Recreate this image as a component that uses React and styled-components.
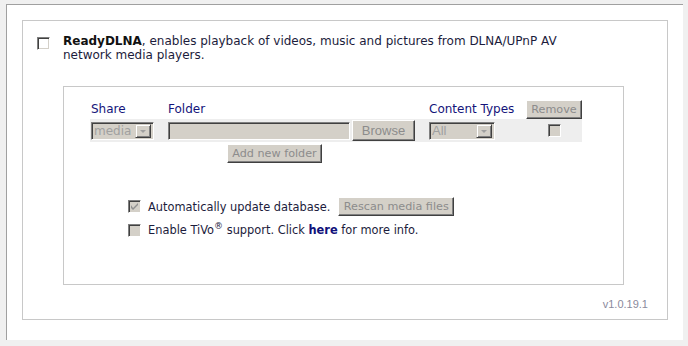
import React from "react";
import styled, { createGlobalStyle } from "styled-components";

const GlobalStyle = createGlobalStyle`
  body {
    margin: 0;
    background: #f0f0f0;
    font-family: "DejaVu Sans", Verdana, sans-serif;
    font-size: 12px;
  }
`;

const Page = styled.div`
  width: 677px;
  height: 336px;
  margin: 4px 0 0 6px;
  background: #fff;
  border-top: 1px solid #a0a0a0;
  border-left: 1px solid #a0a0a0;
  box-sizing: border-box;
  padding: 15px 15px 20px 15px;
`;

const Section = styled.div`
  height: 300px;
  border: 1px solid #c8c8c8;
  box-sizing: border-box;
  display: flex;
  flex-direction: column;
`;

const Intro = styled.div`
  display: flex;
  align-items: flex-start;
  gap: 13px;
  margin: 13px 0 0 14px;
  color: #1c1c3c;
  line-height: 14px;
  width: 540px;

  b {
    color: #111;
  }
`;

const Check = styled.span`
  flex: none;
  position: relative;
  width: 13px;
  height: 13px;
  box-sizing: border-box;
  border: 1px solid;
  border-color: #808080 #fff #fff #808080;
  background: ${(p) => (p.$disabled ? "#d4d0c8" : "#fff")};
  box-shadow: inset 1px 1px #404040, inset -1px -1px #d4d0c8;
  margin-top: ${(p) => p.$top || 0}px;

  svg {
    position: absolute;
    left: 2px;
    top: 2px;
  }
`;

const Settings = styled.div`
  width: 561px;
  height: 199px;
  margin: 24px 0 0 40px;
  border: 1px solid #c8c8c8;
  box-sizing: border-box;
  display: flex;
  flex-direction: column;
`;

const Table = styled.div`
  width: 492px;
  margin: 12px 0 0 26px;
`;

const Grid = styled.div`
  display: grid;
  grid-template-columns: 77px 261px 97px 57px;
  align-items: ${(p) => (p.$head ? "end" : "center")};
  height: ${(p) => (p.$head ? 20 : 23)}px;
  background: ${(p) => (p.$head ? "transparent" : "#eeeeee")};
`;

const Label = styled.span`
  color: #14147a;
  padding: 0 0 3px 1px;
`;

const Cell = styled.div`
  display: flex;
  align-items: center;
  justify-content: ${(p) => (p.$center ? "center" : "flex-start")};
  gap: 2px;
  padding-left: ${(p) => p.$pad ?? 1}px;
`;

const Select = styled.div`
  width: ${(p) => p.$w}px;
  height: 18px;
  box-sizing: border-box;
  border: 1px solid;
  border-color: #808080 #fff #fff #808080;
  box-shadow: inset 1px 1px #404040, inset -1px -1px #d4d0c8;
  background: #d4d0c8;
  display: flex;
  align-items: center;
  justify-content: space-between;
  padding: 2px;
  color: #a0a0a0;
  font-family: ${(p) => (p.$arial ? '"Liberation Sans", Arial, sans-serif' : "inherit")};
  font-size: ${(p) => (p.$arial ? 13 : 12)}px;
  line-height: 12px;
`;

const Arrow = styled.span`
  width: 16px;
  height: 14px;
  box-sizing: border-box;
  border: 1px solid;
  border-color: #d4d0c8 #404040 #404040 #d4d0c8;
  box-shadow: inset 1px 1px #fff, inset -1px -1px #808080;
  background: #d4d0c8;
  display: flex;
  align-items: center;
  justify-content: center;

  &::after {
    content: "";
    border-left: 3px solid transparent;
    border-right: 3px solid transparent;
    border-top: 3px solid #a0a0a0;
    margin-top: 2px;
  }
`;

const TextBox = styled.div`
  width: 182px;
  height: 18px;
  box-sizing: border-box;
  border: 1px solid;
  border-color: #808080 #fff #fff #808080;
  box-shadow: inset 1px 1px #404040, inset -1px -1px #d4d0c8;
  background: #d4d0c8;
`;

const Button = styled.button`
  height: ${(p) => p.$h || 19}px;
  width: ${(p) => p.$w}px;
  padding: 0;
  box-sizing: border-box;
  border: 1px solid;
  border-color: #fff #404040 #404040 #fff;
  box-shadow: inset -1px -1px #808080;
  background: #d4d0c8;
  color: #8c8c8c;
  font-family: ${(p) => (p.$arial ? '"Liberation Sans", Arial, sans-serif' : '"DejaVu Sans", Verdana, sans-serif')};
  font-size: ${(p) => (p.$arial ? 13 : 11.2)}px;
  line-height: 1;
  white-space: nowrap;
  margin-left: ${(p) => p.$ml || 0}px;
`;

const AddRow = styled.div`
  margin: 2px 0 0 137px;
`;

const Options = styled.div`
  margin: 34px 0 0 64px;
  display: flex;
  flex-direction: column;
  gap: 6px;
  font-size: 11.4px;
`;

const Option = styled.div`
  display: flex;
  align-items: center;
  gap: 7px;
  color: #1c1c3c;
  height: ${(p) => p.$h}px;

  sup {
    font-size: 9px;
    line-height: 0;
    vertical-align: 5px;
  }
  b {
    color: #10107a;
  }
`;

const Version = styled.div`
  margin: 13px 19px 0 0;
  align-self: flex-end;
  font-family: "Liberation Sans", Arial, sans-serif;
  font-size: 11px;
  color: #8a8a9c;
`;

const Tick = () => (
  <svg width="7" height="7" viewBox="0 0 7 7">
    <path d="M0 2v3l2 2 5-5V0L2 5z" fill="#909090" />
  </svg>
);

export default function App() {
  return (
    <>
      <GlobalStyle />
      <Page>
        <Section>
          <Intro>
            <Check $top={3} />
            <span>
              <b>ReadyDLNA</b>, enables playback of videos, music and pictures from DLNA/UPnP AV
              network media players.
            </span>
          </Intro>
          <Settings>
            <Table>
              <Grid $head>
                <Label>Share</Label>
                <Label>Folder</Label>
                <Label>Content Types</Label>
                <Cell $pad={1}>
                  <Button disabled $w={56}>Remove</Button>
                </Cell>
              </Grid>
              <Grid>
                <Cell>
                  <Select $w={63}>
                    media
                    <Arrow />
                  </Select>
                </Cell>
                <Cell>
                  <TextBox />
                  <Button disabled $arial $w={63} $h={21}>Browse</Button>
                </Cell>
                <Cell>
                  <Select $w={66} $arial>
                    All
                    <Arrow />
                  </Select>
                </Cell>
                <Cell $center>
                  <Check $disabled />
                </Cell>
              </Grid>
              <AddRow>
                <Button disabled $w={95}>Add new folder</Button>
              </AddRow>
            </Table>
            <Options>
              <Option $h={19}>
                <Check $disabled>
                  <Tick />
                </Check>
                <span>Automatically update database.</span>
                <Button disabled $w={116} $ml={1}>
                  Rescan media files
                </Button>
              </Option>
              <Option $h={16}>
                <Check $disabled />
                <span>
                  Enable TiVo<sup>®</sup> support. Click <b>here</b> for more info.
                </span>
              </Option>
            </Options>
          </Settings>
          <Version>v1.0.19.1</Version>
        </Section>
      </Page>
    </>
  );
}
